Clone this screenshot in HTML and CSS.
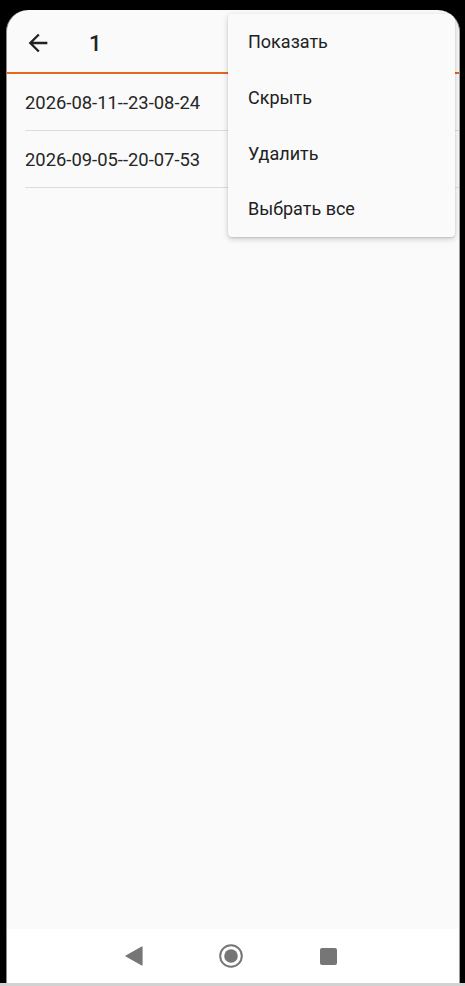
FILE: index.html
```html
<!DOCTYPE html>
<html lang="ru">
<head>
  <meta charset="UTF-8">
  <meta name="viewport" content="width=device-width, initial-scale=1.0">
  <title>1</title>
  <link rel="stylesheet" href="styles.css">
</head>
<body>
  <div class="screen">
    <div class="toolbar">
      <svg class="back" viewBox="0 0 24 24" width="28" height="28">
        <path d="M20 11H7.83l5.59-5.59L12 4l-8 8 8 8 1.41-1.41L7.83 13H20v-2z" fill="#212121"/>
      </svg>
      <span class="title">1</span>
    </div>
    <div class="list">
      <div class="item">2026-08-11--23-08-24</div>
      <div class="item">2026-09-05--20-07-53</div>
    </div>
    <div class="filler"></div>
    <div class="navbar">
      <svg viewBox="0 0 18 20" width="18" height="20">
        <path d="M17 1 L17 19 L1 10 Z" fill="#767676" stroke="#767676" stroke-width="1.2" stroke-linejoin="round"/>
      </svg>
      <svg viewBox="0 0 26 26" width="26" height="26">
        <circle cx="13" cy="13" r="10.8" fill="none" stroke="#767676" stroke-width="2"/>
        <circle cx="13" cy="13" r="6.8" fill="#767676"/>
      </svg>
      <div class="recent"></div>
    </div>

    <div class="menu">
      <div class="menu-item">Показать</div>
      <div class="menu-item">Скрыть</div>
      <div class="menu-item">Удалить</div>
      <div class="menu-item">Выбрать все</div>
    </div>
  </div>
  <div class="bottom-strip"></div>
</body>
</html>
```

FILE: styles.css
```css
body {
  margin: 0;
  background: #000;
  font-family: Roboto, "Noto Sans", sans-serif;
  color: #212121;
}
.screen {
  position: relative;
  margin: 10px 0 0 6px;
  width: 452px;
  height: 973px;
  border-left: 1px solid #8a8a8a;
  border-right: 1px solid #9a9a9a;
  border-radius: 22px 22px 0 0;
  overflow: hidden;
  background: #fafafa;
  display: flex;
  flex-direction: column;
}
.toolbar {
  height: 58px;
  padding-top: 4px;
  padding-left: 17px;
  display: flex;
  align-items: center;
  border-bottom: 2px solid #e5661f;
}
.title {
  margin-left: 37px;
  font-size: 22px;
  font-weight: 500;
  color: #222;
}
.list {
  padding-left: 18px;
}
.item {
  height: 56px;
  display: flex;
  align-items: center;
  font-size: 18.4px;
  color: #262626;
  border-bottom: 1px solid #dcdcdc;
}
.filler {
  flex: 1;
}
.navbar {
  height: 54px;
  background: #fff;
  display: flex;
  align-items: center;
  padding-left: 118px;
}
.navbar svg:first-child {
  margin-right: 75px;
}
.navbar svg:nth-child(2) {
  margin-right: 76px;
}
.recent {
  width: 17px;
  height: 17px;
  background: #767676;
  border-radius: 2px;
}
.menu {
  position: absolute;
  top: 4px;
  left: 221px;
  width: 227px;
  background: #fafafa;
  border-radius: 4px;
  box-shadow: 0 2px 6px rgba(0,0,0,0.18), 0 1px 2px rgba(0,0,0,0.12);
}
.menu-item {
  height: 55.7px;
  display: flex;
  align-items: center;
  padding-left: 20px;
  font-size: 18px;
  color: #212121;
}
.bottom-strip {
  height: 3px;
  background: #d2d2d2;
}
```
